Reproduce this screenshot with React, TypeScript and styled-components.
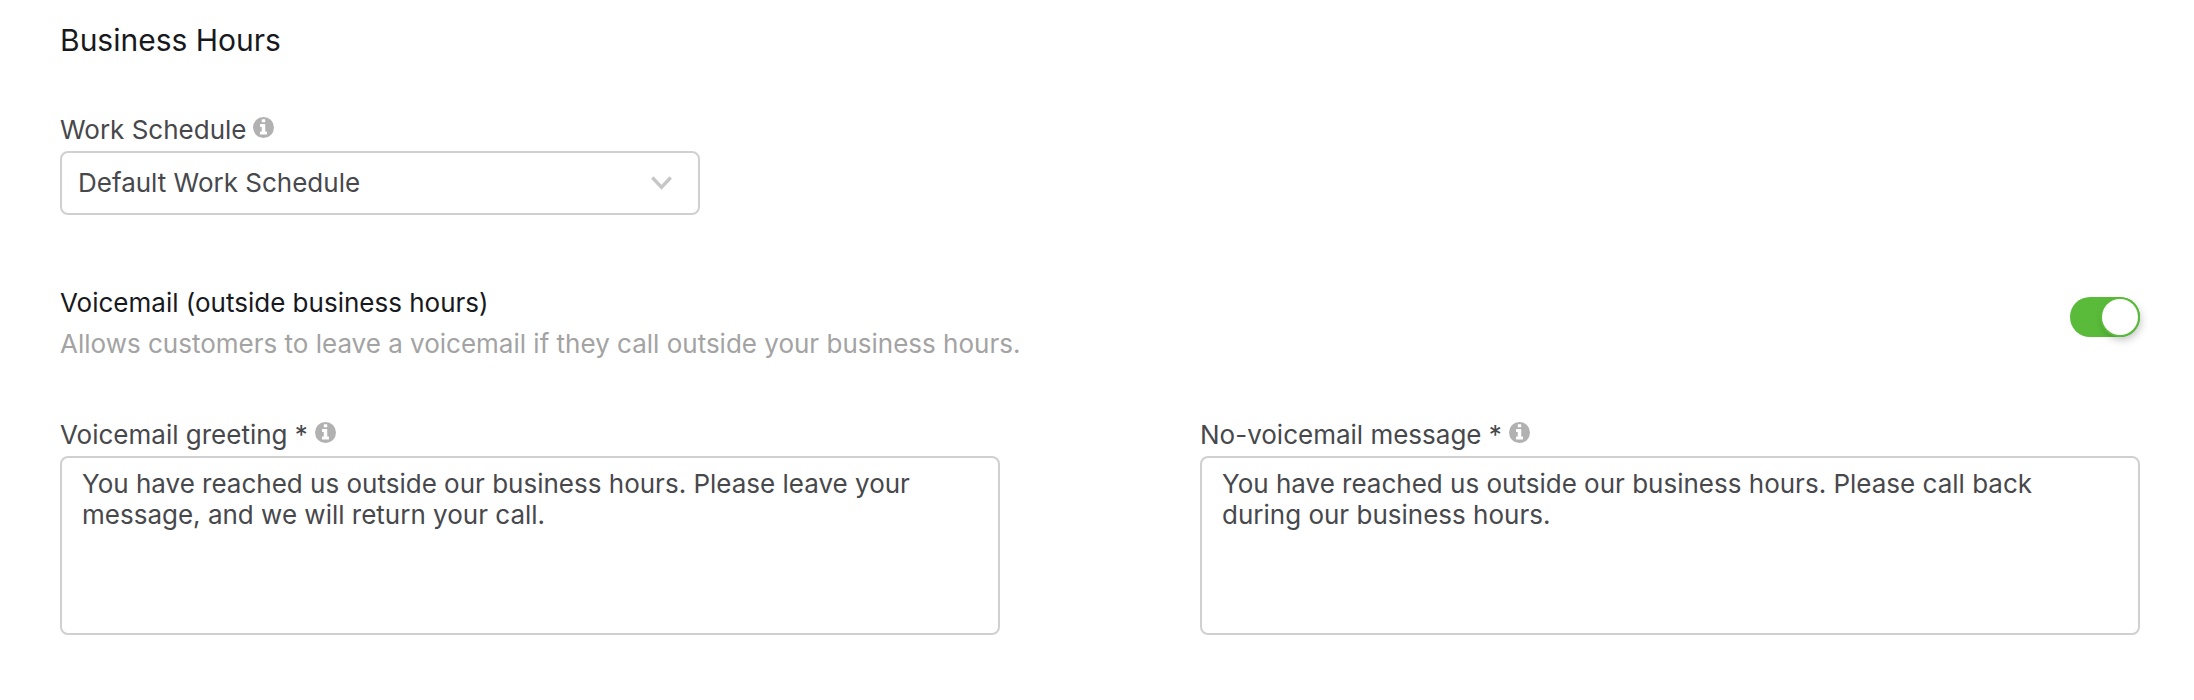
import React from "react";
import styled, { createGlobalStyle } from "styled-components";

const GlobalStyle = createGlobalStyle`
  *, *::before, *::after { box-sizing: border-box; }
  body { margin: 0; background: #fff; font-family: Inter, sans-serif; color: #47484c; }
`;

const Page = styled.main`
  width: 2194px;
  height: 700px;
  padding: 20px 54px 0 60px;
  background: #fff;
`;

const Heading = styled.h1`
  margin: 0;
  font-size: 30px;
  line-height: 40px;
  font-weight: 400;
  color: #18191d;
`;

const Field = styled.div`
  display: flex;
  flex-direction: column;
`;

const ScheduleField = styled(Field)`
  width: 640px;
  margin-top: 53px;
`;

const Label = styled.label`
  display: flex;
  align-items: center;
  gap: 7px;
  height: 32px;
  margin-bottom: 6px;
  font-size: 26px;

  svg {
    margin-bottom: 3px;
  }
`;

const Select = styled.button`
  display: flex;
  align-items: center;
  justify-content: space-between;
  height: 64px;
  padding: 0 26px 2px 16px;
  border: 2px solid #d0d0d0;
  border-radius: 8px;
  background: #fff;
  font: 26px Inter, sans-serif;
  color: #47484c;

  svg {
    margin-top: 2px;
  }
`;

const VoicemailRow = styled.section`
  display: flex;
  align-items: flex-start;
  justify-content: space-between;
  margin-top: 68px;
`;

const Title = styled.h2`
  margin: 0;
  font-size: 26px;
  line-height: 40px;
  font-weight: 400;
  color: #18191d;
`;

const Description = styled.p`
  margin: 1px 0 0;
  font-size: 26px;
  line-height: 40px;
  color: #a3a3a3;
`;

const Switch = styled.button`
  display: flex;
  justify-content: flex-end;
  width: 70px;
  height: 40px;
  margin-top: 14px;
  padding: 2px;
  border: 0;
  border-radius: 20px;
  background: #5abb3a;
`;

const Knob = styled.span`
  width: 36px;
  height: 36px;
  border-radius: 50%;
  background: #fff;
  box-shadow: 0 0 0 2px #5abb3a, 2px 4px 10px rgba(0, 0, 0, 0.28);
`;

const Messages = styled.section`
  display: grid;
  grid-template-columns: 940px 940px;
  column-gap: 200px;
  margin-top: 54px;
`;

const TextArea = styled.textarea`
  height: 179px;
  padding: 10px 20px;
  border: 2px solid #d0d0d0;
  border-radius: 8px;
  resize: none;
  font: 26px/31px Inter, sans-serif;
  color: #47484c;
`;

const InfoIcon = () => (
  <svg width="21" height="21" viewBox="0 0 21 21" aria-hidden="true">
    <circle cx="10.5" cy="10.5" r="10.5" fill="#b1b1b1" />
    <path
      d="M9.2 2.2h2.6q.45 0 .45.45v2.2q0 .45-.45.45H9.2q-.45 0-.45-.45v-2.2q0-.45.45-.45zM7.45 7h4.35q.45 0 .45.45v7h1.3q.45 0 .45.45v2.2q0 .45-.45.45h-6.1q-.45 0-.45-.45v-2.2q0-.45.45-.45h1.3v-4.4h-1.3Q7 10.05 7 9.6V7.45Q7 7 7.45 7z"
      fill="#fff"
    />
  </svg>
);

const Chevron = () => (
  <svg width="21" height="14" viewBox="0 0 21 14" fill="none" aria-hidden="true">
    <path d="M1.3 1.5L10.5 11.3L19.7 1.5" stroke="#c6c6c6" strokeWidth="3.4" />
  </svg>
);

export default function App() {
  return (
    <Page>
      <GlobalStyle />
      <Heading>Business Hours</Heading>
      <ScheduleField>
        <Label>Work Schedule <InfoIcon /></Label>
        <Select>Default Work Schedule <Chevron /></Select>
      </ScheduleField>
      <VoicemailRow>
        <div>
          <Title>Voicemail (outside business hours)</Title>
          <Description>Allows customers to leave a voicemail if they call outside your business hours.</Description>
        </div>
        <Switch role="switch" aria-checked="true"><Knob /></Switch>
      </VoicemailRow>
      <Messages>
        <Field>
          <Label>Voicemail greeting * <InfoIcon /></Label>
          <TextArea defaultValue="You have reached us outside our business hours. Please leave your message, and we will return your call." />
        </Field>
        <Field>
          <Label>No-voicemail message * <InfoIcon /></Label>
          <TextArea defaultValue="You have reached us outside our business hours. Please call back during our business hours." />
        </Field>
      </Messages>
    </Page>
  );
}
